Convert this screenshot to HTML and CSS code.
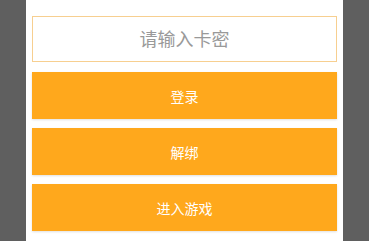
FILE: index.html
```html
<!DOCTYPE html>
<html lang="zh">
<head>
    <meta charset="UTF-8">
    <meta name="viewport" content="width=device-width, initial-scale=1.0">
    <title>卡密登录</title>
    <link rel="stylesheet" href="styles.css">
</head>
<body>
    <div class="panel">
        <input type="text" class="card-input" placeholder="请输入卡密">
        <button class="action-button">登录</button>
        <button class="action-button">解绑</button>
        <button class="action-button">进入游戏</button>
    </div>
</body>
</html>
```

FILE: styles.css
```css
body {
    margin: 0;
    background: #5f5f5f;
    font-family: Roboto, "Noto Sans CJK SC", sans-serif;
}

.panel {
    width: 305px;
    height: 241px;
    margin-left: 26px;
    padding: 16px 6px 0;
    background: #fff;
    display: flex;
    flex-direction: column;
    box-sizing: border-box;
    width: 317px;
}

.card-input {
    height: 46px;
    border: 1px solid #f7cf90;
    box-sizing: border-box;
    text-align: center;
    font-size: 18px;
    font-family: inherit;
    color: #333;
    outline: none;
    margin-bottom: 10px;
}

.card-input::placeholder {
    color: #999;
}

.action-button {
    height: 47px;
    margin-bottom: 9px;
    border: none;
    background: #ffa81c;
    color: #fff;
    font-size: 14px;
    font-family: inherit;
    box-shadow: 0 1px 2px rgba(0, 0, 0, 0.12);
    cursor: pointer;
}
```
